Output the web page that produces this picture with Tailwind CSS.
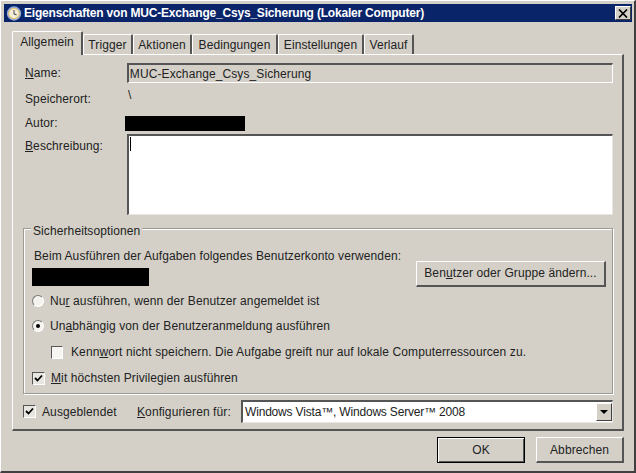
<!DOCTYPE html>
<html>
<head>
<meta charset="utf-8">
<script src="https://cdn.jsdelivr.net/npm/@tailwindcss/browser@4"></script>
</head>
<body class="m-0 overflow-hidden">
<div class="w-[636px] h-[473px] bg-[#d4d0c8] flex flex-col pt-[3px] pl-[3px] pr-[3px] border-t border-l border-white border-r-2 border-b-2 border-r-[#404040] border-b-[#404040] text-[12px] tracking-[0.1px] text-[#222] font-['Liberation_Sans',sans-serif] leading-none box-border">
  <div class="h-[18px] mr-[-1px] bg-[#0a246a] flex items-center pl-[2px] pr-[1px] shrink-0">
    <svg width="16" height="16" viewBox="0 0 16 16" class="shrink-0">
      <circle cx="8" cy="8.5" r="6.5" fill="#e8c878" stroke="#8fa8d8" stroke-width="1.4"/>
      <circle cx="8" cy="8.5" r="4.6" fill="#f4efd8"/>
      <path d="M8 5v3.8l2.6 1.2" fill="none" stroke="#555" stroke-width="1.1"/>
    </svg>
    <span class="ml-[2px] text-white font-bold text-[12px] tracking-[-0.2px] whitespace-nowrap">Eigenschaften von MUC-Exchange_Csys_Sicherung (Lokaler Computer)</span>
    <div class="ml-auto w-[16px] h-[14px] bg-[#d4d0c8] border-t border-l border-white border-r border-b border-r-[#404040] border-b-[#404040] flex items-center justify-center">
      <svg width="10" height="9" viewBox="0 0 10 9"><path d="M1 0.5l8 8M9 0.5l-8 8" stroke="#000" stroke-width="1.7"/></svg>
    </div>
  </div>

  <div class="ml-[8px] mt-[9px] w-[612px] flex items-end h-[23px] shrink-0 relative z-10">
    <div class="w-[71px] h-[24px] mb-[-1px] bg-[#d4d0c8] border-t border-l border-white border-r-2 border-r-[#555] rounded-t-[2px] flex items-center justify-center pb-[3px]">Allgemein</div>
    <div class="w-[50px] h-[20px] bg-[#d4d0c8] border-t border-l border-white border-r-2 border-r-[#555] rounded-t-[2px] flex items-center justify-center">Trigger</div>
    <div class="w-[59px] h-[20px] bg-[#d4d0c8] border-t border-l border-white border-r-2 border-r-[#555] rounded-t-[2px] flex items-center justify-center">Aktionen</div>
    <div class="w-[86px] h-[20px] bg-[#d4d0c8] border-t border-l border-white border-r-2 border-r-[#555] rounded-t-[2px] flex items-center justify-center">Bedingungen</div>
    <div class="w-[86px] h-[20px] bg-[#d4d0c8] border-t border-l border-white border-r-2 border-r-[#555] rounded-t-[2px] flex items-center justify-center">Einstellungen</div>
    <div class="w-[50px] h-[20px] bg-[#d4d0c8] border-t border-l border-white border-r-2 border-r-[#555] rounded-t-[2px] flex items-center justify-center">Verlauf</div>
  </div>

  <div class="ml-[8px] w-[612px] h-[377px] shrink-0 border-t border-l border-white border-r-2 border-b-2 border-r-[#555] border-b-[#555] flex flex-col pl-[9px] pr-[9px] box-border">
    <div class="h-[20px] mt-[8px] flex items-center">
      <span class="w-[105px] pl-[3px]"><u>N</u>ame:</span>
      <div class="w-[487px] h-[20px] border-t-2 border-l-2 border-t-[#555] border-l-[#555] border-b border-r border-white flex items-center pl-[1px]">MUC-Exchange_Csys_Sicherung</div>
    </div>
    <div class="h-[20px] mt-[4px] flex items-center">
      <span class="w-[106px] pl-[3px] pt-[4px]">Speicherort:</span>
      <span class="pb-[4px]">\</span>
    </div>
    <div class="h-[16px] mt-[8px] flex items-center">
      <span class="w-[103px] pl-[3px] pb-[1px]">Autor:</span>
      <div class="w-[120px] h-[15px] bg-black"></div>
    </div>
    <div class="h-[81px] mt-[3px] flex">
      <span class="w-[105px] pl-[3px] pt-[6px]"><u>B</u>eschreibung:</span>
      <div class="w-[487px] h-[81px] bg-white border-t-2 border-l-2 border-b border-r border-[#e8e6e0] border-t-[#555] border-l-[#555] pl-[1px] pt-[1px]">
        <div class="w-px h-[14px] bg-black"></div>
      </div>
    </div>

    <div class="mt-[13px] w-[590px] h-[166px] ml-px border border-[#9c9a94] shadow-[inset_1px_1px_0_#fff,1px_1px_0_#fff] relative flex flex-col shrink-0 pl-[8px] box-border">
      <span class="absolute left-[7px] top-[-4px] bg-[#d4d0c8] px-[2px]">Sicherheitsoptionen</span>
      <div class="mt-[21px] pl-[2px] whitespace-nowrap">Beim Ausführen der Aufgaben folgendes Benutzerkonto verwenden:</div>
      <div class="h-[25px] mt-[-1px] flex items-center justify-between pr-[6px]">
        <div class="w-[117px] h-[18px] bg-black mt-[7px]"></div>
        <div class="w-[190px] h-[26px] bg-[#d4d0c8] border-t border-l border-white border-r-2 border-b-2 border-r-[#555] border-b-[#555] flex items-center justify-center">Ben<u>u</u>tzer oder Gruppe ändern...</div>
      </div>
      <div class="h-[16px] mt-[7px] flex items-center">
        <span class="w-[12px] h-[12px] rounded-full bg-[#f4f3ef] border border-t-[#777] border-l-[#777] border-r-white border-b-white shrink-0"></span>
        <span class="ml-[6px]">Nu<u>r</u> ausführen, wenn der Benutzer angemeldet ist</span>
      </div>
      <div class="h-[16px] mt-[9px] flex items-center">
        <span class="w-[12px] h-[12px] rounded-full bg-[#f4f3ef] border border-t-[#777] border-l-[#777] border-r-white border-b-white shrink-0 flex items-center justify-center"><span class="w-[4px] h-[4px] rounded-full bg-black"></span></span>
        <span class="ml-[6px]">Un<u>a</u>bhängig von der Benutzeranmeldung ausführen</span>
      </div>
      <div class="h-[16px] mt-[10px] flex items-center pl-[19px]">
        <span class="w-[12px] h-[13px] bg-[#f6f5f1] border-t border-l border-t-[#555] border-l-[#555] border-b border-r border-white shrink-0"></span>
        <span class="ml-[8px]">Kenn<u>w</u>ort nicht speichern. Die Aufgabe greift nur auf lokale Computerressourcen zu.</span>
      </div>
      <div class="h-[16px] mt-[10px] flex items-center">
        <span class="w-[13px] h-[13px] bg-[#e8e6e0] border-t border-l border-t-[#555] border-l-[#555] border-b border-r border-white shrink-0 flex items-center justify-center">
          <svg width="9" height="9" viewBox="0 0 9 9"><path d="M1 4l2.5 2.5L8 1.5" fill="none" stroke="#000" stroke-width="1.8"/></svg>
        </span>
        <span class="ml-[6px]"><u>M</u>it höchsten Privilegien ausführen</span>
      </div>
    </div>

    <div class="h-[23px] mt-[6px] ml-px flex items-center">
      <span class="w-[13px] h-[13px] bg-[#e8e6e0] border-t border-l border-t-[#555] border-l-[#555] border-b border-r border-white shrink-0 flex items-center justify-center">
        <svg width="9" height="9" viewBox="0 0 9 9"><path d="M1 4l2.5 2.5L8 1.5" fill="none" stroke="#000" stroke-width="1.8"/></svg>
      </span>
      <span class="ml-[6px] w-[95px]">Aus<u>g</u>eblendet</span>
      <span class="w-[104px]"><u>K</u>onfigurieren für:</span>
      <div class="w-[372px] h-[23px] bg-white border-t-2 border-l-2 border-b border-r border-[#e8e6e0] border-t-[#555] border-l-[#555] flex items-center justify-between pl-[2px] whitespace-nowrap">
        <span class="tracking-[-0.18px]">Windows Vista™, Windows Server™ 2008</span>
        <div class="w-[16px] h-[18px] bg-[#d4d0c8] border-t border-l border-white border-r border-b border-r-[#404040] border-b-[#404040] flex items-center justify-center">
          <svg width="8" height="4" viewBox="0 0 8 4"><path d="M0 0h8L4 4z" fill="#000"/></svg>
        </div>
      </div>
    </div>
  </div>

  <div class="mt-[6px] ml-[8px] w-[612px] flex justify-end gap-[11px]">
    <div class="w-[88px] h-[26px] bg-[#d4d0c8] border border-black shadow-[inset_1px_1px_0_#fff,inset_-1px_-1px_0_#555] flex items-center justify-center">OK</div>
    <div class="w-[88px] h-[26px] bg-[#d4d0c8] border-t border-l border-white border-r-2 border-b-2 border-r-[#555] border-b-[#555] flex items-center justify-center">Abbrechen</div>
  </div>
</div>
</body>
</html>
